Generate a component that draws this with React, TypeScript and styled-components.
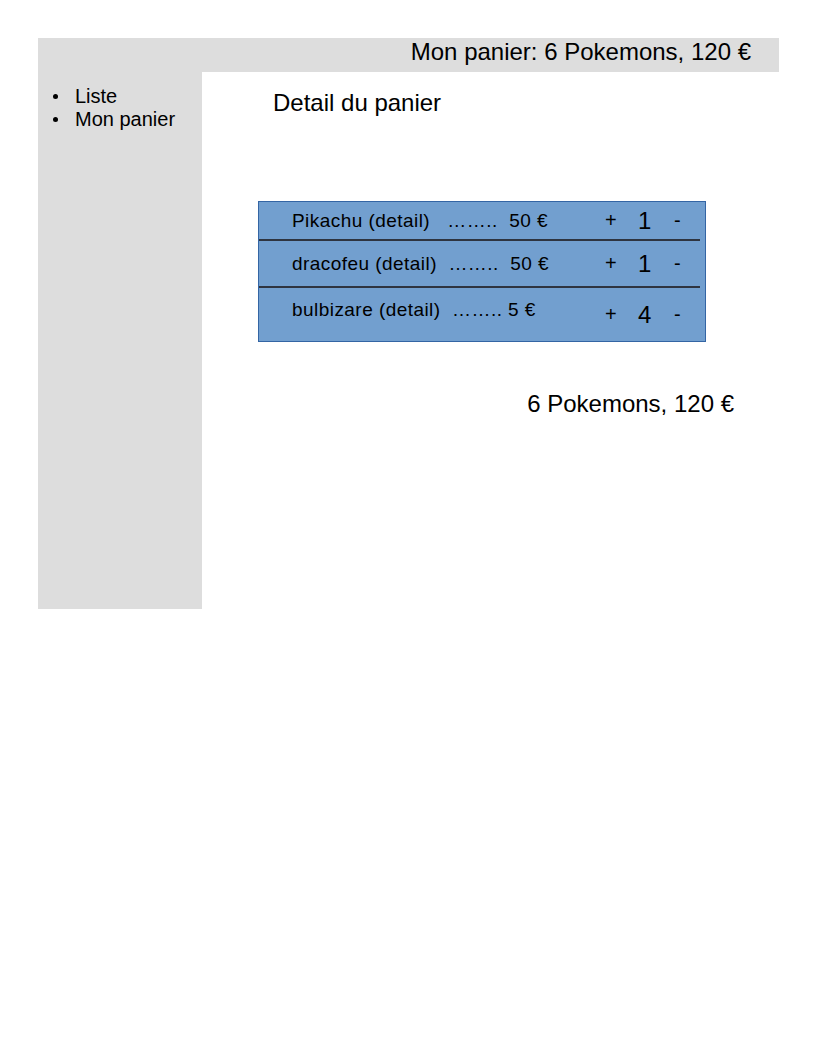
import React, { ReactElement } from "react";
import styled, { createGlobalStyle } from "styled-components";

const GlobalStyle = createGlobalStyle`
  body {
    margin: 0;
    background: #ffffff;
    font-family: "Liberation Sans", Arial, sans-serif;
    color: #000000;
  }
`;

const Frame = styled.div`
  width: 741px;
  margin: 38px 0 0 38px;
`;

const Header = styled.header`
  height: 34px;
  padding-right: 28px;
  background: #dddddd;
  font-size: 24px;
  line-height: 28px;
  text-align: right;
`;

const Body = styled.div`
  display: flex;
`;

const Sidebar = styled.nav`
  width: 164px;
  height: 537px;
  background: #dddddd;
`;

const NavList = styled.ul`
  margin: 0;
  padding: 13px 0 0 15px;
  list-style: none;
  font-size: 20px;
  line-height: 23px;
`;

const NavItem = styled.li`
  display: flex;
  align-items: center;

  &::before {
    content: "";
    width: 5px;
    height: 5px;
    margin-right: 17px;
    border-radius: 50%;
    background: #000000;
  }
`;

const Main = styled.main`
  flex: 1;
  padding-top: 17px;
`;

const Title = styled.h1`
  margin: 0 0 0 71px;
  font-size: 24px;
  font-weight: normal;
  line-height: 28px;
`;

const Cart = styled.div`
  width: 446px;
  margin: 84px 0 0 56px;
  border: 1px solid #3465a4;
  background: #729fcf;
`;

const Row = styled.div<{ $height: number; $last?: boolean }>`
  display: grid;
  grid-template-columns: 313px 33px 36px auto;
  align-items: center;
  height: ${(p) => p.$height}px;
  margin-right: ${(p) => (p.$last ? 0 : 5)}px;
  padding-left: 33px;
  border-bottom: ${(p) => (p.$last ? "none" : "2px solid #2e3440")};
  box-sizing: border-box;
`;

const Label = styled.span<{ $lift?: number }>`
  font-size: 19px;
  letter-spacing: 0.45px;
  white-space: pre;
  margin-bottom: ${(p) => p.$lift ?? 0}px;
`;

const Sign = styled.span`
  font-size: 20px;
`;

const Qty = styled.span`
  font-size: 24px;
`;

const Total = styled.div`
  margin-top: 48px;
  padding-right: 45px;
  font-size: 24px;
  line-height: 28px;
  text-align: right;
`;

const items = [
  { label: "Pikachu (detail)   ……..  50 €", qty: 1, height: 39 },
  { label: "dracofeu (detail)  ……..  50 €", qty: 1, height: 47 },
  { label: "bulbizare (detail)  …….. 5 €", qty: 4, height: 53, lift: 10 },
];

export default function App(): ReactElement {
  return (
    <>
      <GlobalStyle />
      <Frame>
        <Header>Mon panier: 6 Pokemons, 120 €</Header>
        <Body>
          <Sidebar>
            <NavList>
              <NavItem>Liste</NavItem>
              <NavItem>Mon panier</NavItem>
            </NavList>
          </Sidebar>
          <Main>
            <Title>Detail du panier</Title>
            <Cart>
              {items.map((item, i) => (
                <Row key={item.label} $height={item.height} $last={i === items.length - 1}>
                  <Label $lift={item.lift}>{item.label}</Label>
                  <Sign>+</Sign>
                  <Qty>{item.qty}</Qty>
                  <Sign>-</Sign>
                </Row>
              ))}
            </Cart>
            <Total>6 Pokemons, 120 €</Total>
          </Main>
        </Body>
      </Frame>
    </>
  );
}
